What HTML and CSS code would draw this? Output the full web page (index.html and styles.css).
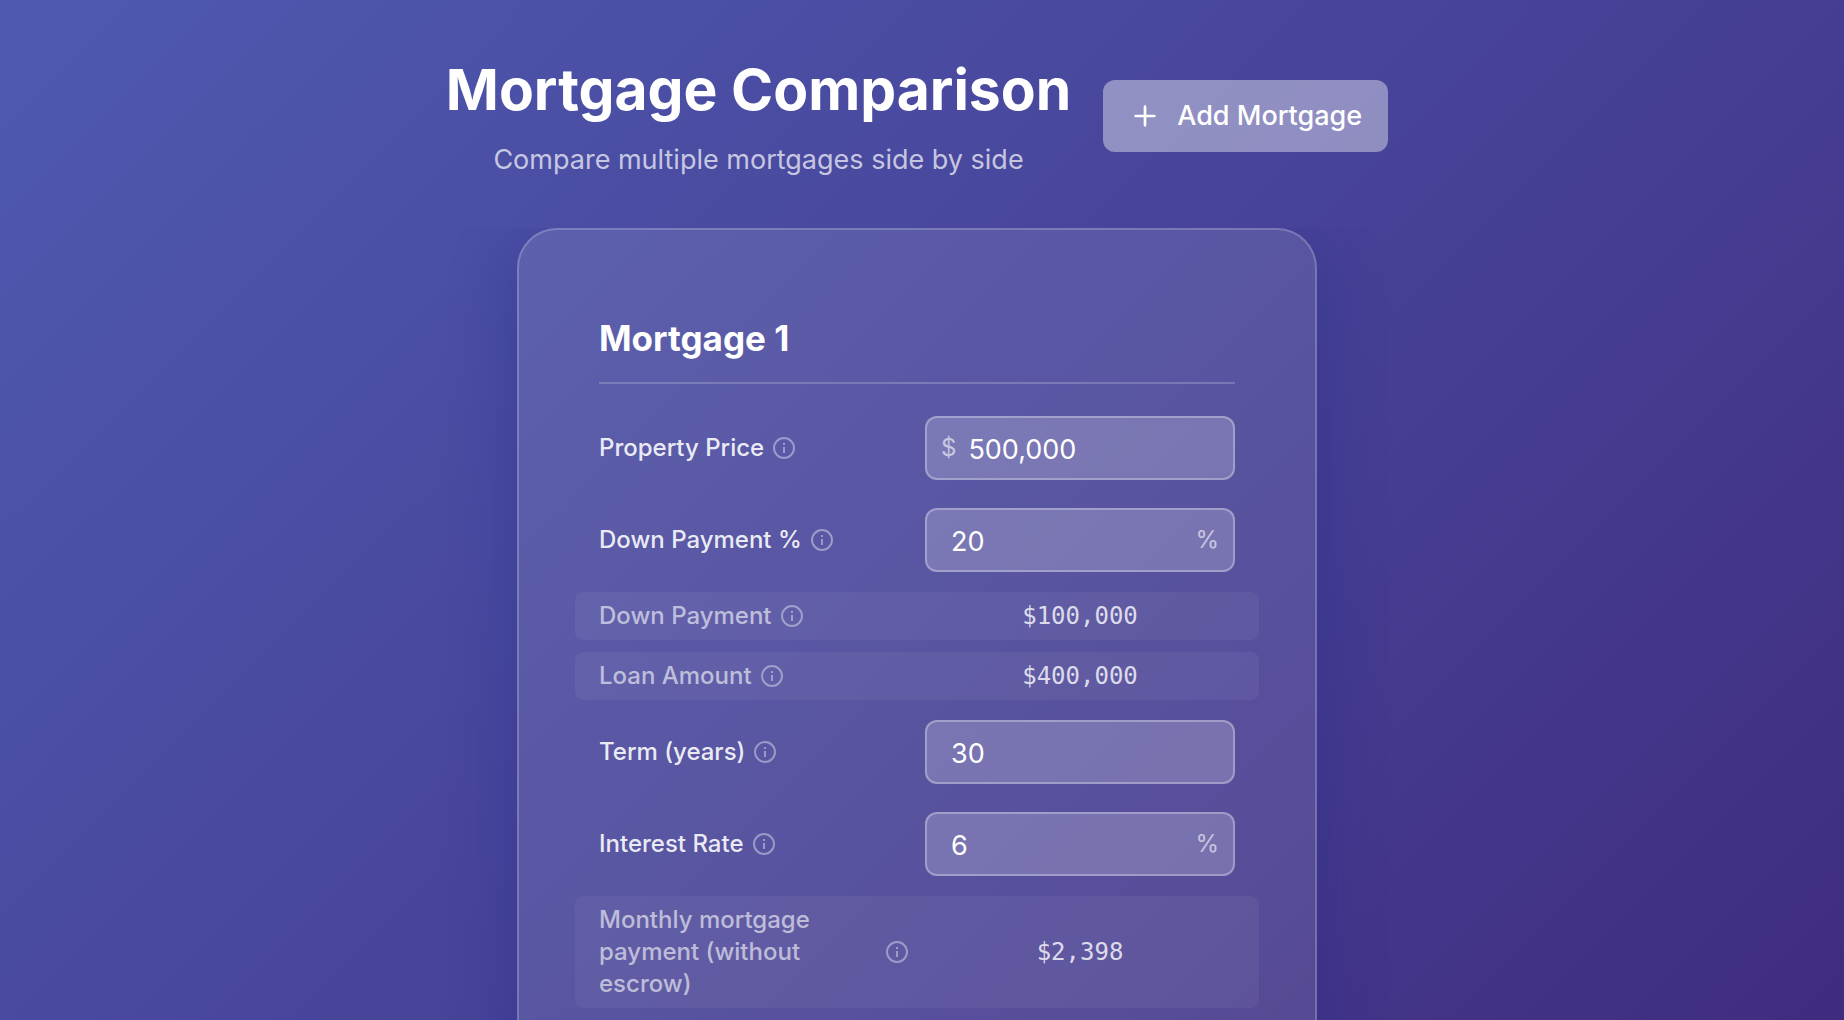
FILE: index.html
```html
<!DOCTYPE html>
<html lang="en">
<head>
<meta charset="utf-8">
<meta name="viewport" content="width=device-width, initial-scale=1">
<title>Mortgage Comparison</title>
<link rel="stylesheet" href="styles.css">
</head>
<body>
<svg class="sprite" aria-hidden="true">
  <symbol id="info" viewBox="0 0 24 24">
    <circle cx="12" cy="12" r="10" fill="none" stroke="currentColor" stroke-width="2"/>
    <path d="M12 11v6M12 7v2" fill="none" stroke="currentColor" stroke-width="2"/>
  </symbol>
</svg>
<main class="page">
  <header class="header">
    <div class="heading">
      <h1 class="title">Mortgage Comparison</h1>
      <p class="subtitle">Compare multiple mortgages side by side</p>
    </div>
    <button class="add" type="button">
      <svg class="plus" viewBox="0 0 24 24" aria-hidden="true"><path d="M5 12h14M12 5v14" fill="none" stroke="currentColor" stroke-width="2" stroke-linecap="round"/></svg>
      Add Mortgage
    </button>
  </header>
  <div class="cards">
    <section class="card">
      <h2 class="card-title">Mortgage 1</h2>
      <div class="rows">
        <div class="row">
          <label class="label" for="price"><span>Property Price</span><svg class="info"><use href="#info"/></svg></label>
          <div class="field has-prefix"><span class="affix prefix">$</span><input class="input" id="price" type="text" value="500,000"></div>
        </div>
        <div class="row">
          <label class="label" for="down"><span>Down Payment %</span><svg class="info"><use href="#info"/></svg></label>
          <div class="field"><input class="input" id="down" type="text" value="20"><span class="affix suffix">%</span></div>
        </div>
        <div class="row computed">
          <div class="label"><span>Down Payment</span><svg class="info"><use href="#info"/></svg></div>
          <output class="value">$100,000</output>
        </div>
        <div class="row computed">
          <div class="label"><span>Loan Amount</span><svg class="info"><use href="#info"/></svg></div>
          <output class="value">$400,000</output>
        </div>
        <div class="row">
          <label class="label" for="term"><span>Term (years)</span><svg class="info"><use href="#info"/></svg></label>
          <div class="field"><input class="input" id="term" type="text" value="30"></div>
        </div>
        <div class="row">
          <label class="label" for="rate"><span>Interest Rate</span><svg class="info"><use href="#info"/></svg></label>
          <div class="field"><input class="input" id="rate" type="text" value="6"><span class="affix suffix">%</span></div>
        </div>
        <div class="row computed">
          <div class="label"><span>Monthly mortgage payment (without escrow)</span><svg class="info"><use href="#info"/></svg></div>
          <output class="value">$2,398</output>
        </div>
      </div>
    </section>
  </div>
</main>
</body>
</html>
```
FILE: styles.css
```css
* {
  box-sizing: border-box;
}

body {
  margin: 0;
  height: 100vh;
  overflow: hidden;
  background: linear-gradient(135deg, #4e5ab0 0%, #453d92 66%, #402c7e 100%);
  color: #fff;
  font-family: Inter, "Liberation Sans", sans-serif;
}

.sprite {
  display: none;
}

.page {
  padding: 48px 10px 0 0;
}

.header {
  display: flex;
  justify-content: center;
  align-items: center;
  gap: 32px;
  margin-bottom: 44px;
}

.heading {
  text-align: center;
}

.title {
  margin: 0 0 8px;
  font-size: 57px;
  line-height: 84px;
  font-weight: 700;
}

.subtitle {
  margin: 0;
  padding-bottom: 4px;
  font-size: 27px;
  line-height: 40px;
  color: rgba(255, 255, 255, 0.7);
}

.add {
  display: flex;
  align-items: center;
  gap: 16px;
  padding: 16px 26px;
  border: 0;
  border-radius: 12px;
  background: rgba(255, 255, 255, 0.4);
  color: inherit;
  font: 500 27px/40px Inter, "Liberation Sans", sans-serif;
}

.plus {
  width: 32px;
  height: 32px;
}

.cards {
  display: flex;
  justify-content: center;
  overflow: hidden;
}

.card {
  width: 800px;
  padding: 80px;
  border: 2px solid rgba(255, 255, 255, 0.2);
  border-radius: 40px;
  background: rgba(255, 255, 255, 0.1);
  box-shadow: 0 16px 64px rgba(31, 38, 135, 0.37);
}

.card-title {
  margin: 0 0 24px;
  padding-bottom: 16px;
  border-bottom: 2px solid rgba(255, 255, 255, 0.2);
  font-size: 35px;
  line-height: 56px;
  font-weight: 700;
}

.rows {
  display: flex;
  flex-direction: column;
  gap: 12px;
}

.row {
  display: grid;
  grid-template-columns: repeat(2, minmax(0, 1fr));
  gap: 16px;
  align-items: center;
  padding: 8px 0;
}

.computed {
  margin: 0 -24px;
  padding: 8px 24px;
  border-radius: 8px;
  background: rgba(255, 255, 255, 0.05);
}

.label {
  display: flex;
  align-items: center;
  gap: 8px;
  font-size: 24px;
  line-height: 32px;
  font-weight: 500;
  color: rgba(255, 255, 255, 0.9);
}

.computed .label {
  color: rgba(255, 255, 255, 0.6);
}

.info {
  flex: none;
  width: 24px;
  height: 24px;
  color: rgba(255, 255, 255, 0.4);
}

.field {
  display: flex;
  align-items: center;
  height: 64px;
  border: 2px solid rgba(255, 255, 255, 0.3);
  border-radius: 12px;
  background: rgba(255, 255, 255, 0.2);
}

.input {
  flex: 1;
  min-width: 0;
  height: 100%;
  padding: 2px 0 0 24px;
  border: 0;
  outline: 0;
  background: none;
  color: inherit;
  font: 400 27px/40px Inter, "Liberation Sans", sans-serif;
}

.affix {
  font-size: 24px;
  line-height: 32px;
  color: rgba(255, 255, 255, 0.6);
}

.prefix {
  padding-left: 14px;
}

.has-prefix .input {
  padding-left: 12px;
}

.suffix {
  padding-right: 14px;
}

.value {
  text-align: center;
  font-family: "DejaVu Sans Mono", monospace;
  font-size: 24px;
  line-height: 32px;
  color: rgba(255, 255, 255, 0.8);
}
```
